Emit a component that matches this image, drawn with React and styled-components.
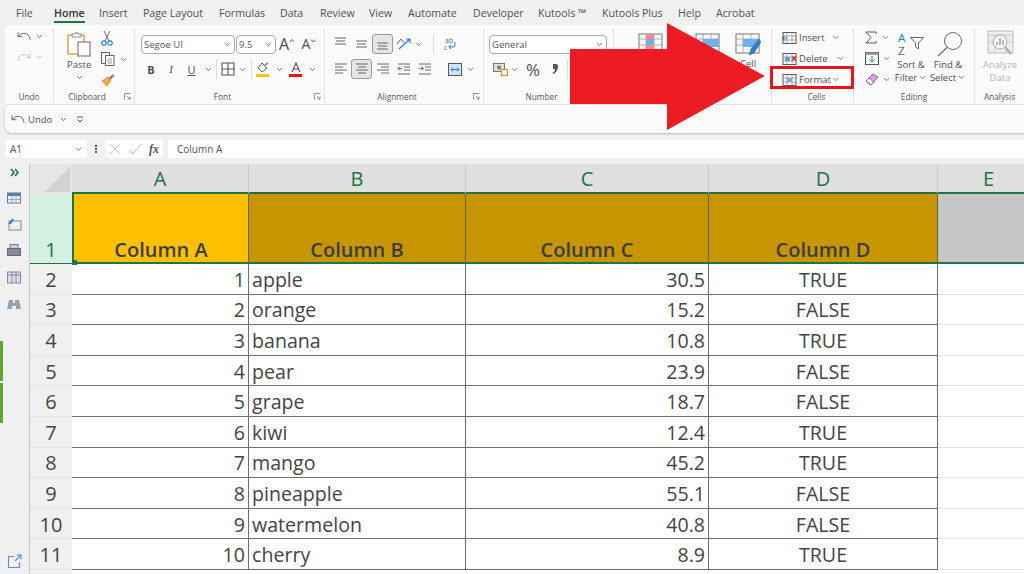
import React from 'react';
import styled, { createGlobalStyle } from 'styled-components';
import { ChevronDown, Undo, Redo } from 'lucide-react';

const GlobalStyle = createGlobalStyle`
  html, body { margin: 0; padding: 0; background: #f0f0f0; }
  body { font-family: "Open Sans", "Noto Sans", sans-serif; color: #444; }
`;

const TABS = [
  ['File', 38], ['Home', 45], ['Insert', 44], ['Page Layout', 76], ['Formulas', 61], ['Data', 40], ['Review', 49],
  ['View', 39], ['Automate', 65], ['Developer', 65], ['Kutools ™', 64], ['Kutools Plus', 76], ['Help', 38], ['Acrobat', 50],
];

const ROWS = [
  [1, 'apple', '30.5', 'TRUE'],
  [2, 'orange', '15.2', 'FALSE'],
  [3, 'banana', '10.8', 'TRUE'],
  [4, 'pear', '23.9', 'FALSE'],
  [5, 'grape', '18.7', 'FALSE'],
  [6, 'kiwi', '12.4', 'TRUE'],
  [7, 'mango', '45.2', 'TRUE'],
  [8, 'pineapple', '55.1', 'FALSE'],
  [9, 'watermelon', '40.8', 'FALSE'],
  [10, 'cherry', '8.9', 'TRUE'],
];

const Page = styled.div`
  position: relative;
  width: 1024px;
  height: 574px;
  overflow: hidden;
  background: #f0f0f0;
`;

const TabBar = styled.div`
  display: flex;
  height: 25px;
  padding-left: 16px;
  align-items: center;
  font-size: 10.6px;
`;

const Tab = styled.div`
  flex: none;
  width: ${p => p.$w}px;
`;

const TabLabel = styled.span`
  position: relative;
  font-weight: ${p => (p.$active ? 600 : 400)};
  color: ${p => (p.$active ? '#333' : '#505050')};
  ${p => p.$active && `
    &::after {
      content: '';
      position: absolute;
      left: 0;
      right: 0;
      bottom: -3px;
      height: 2px;
      background: #217346;
    }
  `}
`;

const Ribbon = styled.div`
  display: flex;
  height: 80px;
  margin-left: 5px;
  background: #fbfbfb;
  border-radius: 6px 0 0 0;
  border-bottom: 1px solid #e2e2e2;
  box-sizing: border-box;
`;

const Group = styled.div`
  display: flex;
  flex-direction: column;
  flex: none;
  box-sizing: border-box;
  width: ${p => p.$w}px;
  height: 75px;
  margin-top: 3px;
  border-right: ${p => (p.$last ? 'none' : '1px solid #e2e2e2')};
`;

const GroupBody = styled.div`
  display: flex;
  height: 62px;
  box-sizing: border-box;
  padding-left: ${p => p.$pl || 0}px;
  padding-top: ${p => p.$pt ?? 6}px;
`;

const GroupFoot = styled.div`
  display: grid;
  grid-template-columns: 1fr auto 1fr;
  align-items: center;
  height: 13px;
  font-size: 8.3px;
  color: #555;
`;

const FootLabel = styled.span`
  grid-column: 2;
  margin-right: ${p => p.$mr || 0}px;
  margin-left: ${p => p.$ml || 0}px;
`;

const Launcher = styled.svg`
  grid-column: 3;
  justify-self: end;
  margin-right: 3px;
  width: 7px;
  height: 7px;
`;

const Col = styled.div`
  display: flex;
  flex: none;
  flex-direction: column;
  gap: ${p => p.$gap || 0}px;
  align-items: ${p => p.$align || 'flex-start'};
  margin-left: ${p => p.$ml || 0}px;
  margin-top: ${p => p.$mt || 0}px;
  ${p => p.$w && `width: ${p.$w}px;`}
`;

const Row = styled.div`
  display: flex;
  align-items: center;
  height: 20px;
  margin-top: ${p => p.$mt || 0}px;
`;

const Slot = styled.div`
  display: flex;
  flex: none;
  align-items: center;
  justify-content: center;
  box-sizing: border-box;
  width: ${p => p.$w || 20}px;
  height: 20px;
  margin-left: ${p => p.$ml || 0}px;
  border-radius: 3px;
  ${p => p.$on && 'background: #e6e6e6; border: 1px solid #9a9a9a;'}
`;

const VSep = styled.div`
  flex: none;
  width: 1px;
  height: 20px;
  margin: 0 ${p => p.$m || 5}px;
  background: #dcdcdc;
`;

const Caret = styled(ChevronDown).attrs({ size: 9, strokeWidth: 2 })`
  flex: none;
  color: ${p => (p.$dim ? '#b5b5b5' : '#555')};
  margin-left: ${p => p.$ml || 0}px;
  margin-top: ${p => p.$mt || 0}px;
`;

const SelectBox = styled.div`
  display: flex;
  align-items: center;
  justify-content: space-between;
  box-sizing: border-box;
  flex: none;
  width: ${p => p.$w}px;
  height: 19px;
  margin-left: ${p => p.$ml || 0}px;
  padding: 0 2px;
  background: #fff;
  border: 1px solid #a9a9a9;
  border-radius: 4px;
  font-size: 9.5px;
  color: #555;
`;

const FontBtn = styled.span`
  font-family: ${p => (p.$serif ? '"Liberation Serif", serif' : 'inherit')};
  font-size: 11px;
  font-weight: ${p => (p.$b ? 700 : 400)};
  font-style: ${p => (p.$i ? 'italic' : 'normal')};
  text-decoration: ${p => (p.$u ? 'underline' : 'none')};
  color: #505050;
`;

const BigFont = styled.span`
  font-size: ${p => p.$s}px;
  color: #505050;
  line-height: 1;
`;

const Tiny = styled.span`
  font-size: 9.5px;
  line-height: 13px;
  margin-top: ${p => p.$mt || 0}px;
  color: ${p => (p.$dim ? '#b4b4b4' : '#505050')};
  white-space: nowrap;
  display: flex;
  align-items: center;
  justify-content: center;
`;

const CellRow = styled.div`
  position: relative;
  display: flex;
  align-items: center;
  height: 21px;
  padding-left: 10px;
  font-size: 9.5px;
  color: #505050;
  ${p => p.$marked && `
    &::after {
      content: '';
      position: absolute;
      left: -2px;
      top: -3px;
      width: 84px;
      height: 23px;
      box-sizing: border-box;
      border: 3px solid #e8141c;
    }
  `}
`;

const CellLabel = styled.span`
  margin-left: 2px;
`;

const SortGlyph = styled.div`
  display: flex;
  align-items: flex-start;
  gap: 2px;
  height: 25px;
`;

const SortLetters = styled.div`
  display: flex;
  flex-direction: column;
  width: 10px;
`;

const SortLetter = styled.span`
  display: block;
  font-family: "Liberation Sans", sans-serif;
  font-size: 11px;
  line-height: 12.7px;
  color: ${p => (p.$blue ? '#2b7cd3' : '#666')};
`;

const QuickBar = styled.div`
  display: flex;
  align-items: center;
  height: 28px;
  margin-left: 5px;
  padding-left: 5px;
  box-sizing: border-box;
  background: #fafafa;
  border-radius: 0 0 0 6px;
  box-shadow: 0 1px 2px rgba(0, 0, 0, 0.22);
  font-size: 9.5px;
  color: #505050;
`;

const FormulaBar = styled.div`
  display: flex;
  align-items: center;
  height: 18px;
  margin: 7px 0 6px;
  padding-left: 6px;
`;

const FieldBox = styled.div`
  display: flex;
  align-items: center;
  box-sizing: border-box;
  flex: ${p => (p.$grow ? '1' : 'none')};
  width: ${p => p.$w || 'auto'}px;
  height: 18px;
  padding: 0 ${p => p.$px ?? 4}px;
  margin-left: ${p => p.$ml || 0}px;
  background: #fff;
  border-radius: ${p => (p.$grow ? '3px 0 0 3px' : '3px')};
  font-size: 10px;
  color: #505050;
  justify-content: ${p => (p.$between ? 'space-between' : 'flex-start')};
`;

const Dots = styled.div`
  width: 2px;
  height: 8px;
  margin-left: 8px;
  background: repeating-linear-gradient(#555 0 2px, transparent 2px 3px);
`;

const Main = styled.div`
  display: flex;
  height: 410px;
`;

const SidePane = styled.div`
  display: flex;
  flex-direction: column;
  align-items: center;
  flex: none;
  box-sizing: border-box;
  width: 30px;
  padding-top: 4px;
  border-right: 1px solid #c8c8c8;
`;

const PaneIcon = styled.div`
  display: flex;
  justify-content: center;
  width: 100%;
  height: 14px;
  margin-top: ${p => p.$mt || 0}px;
`;

const AddinStrip = styled.div`
  align-self: flex-start;
  width: 3px;
  height: 82px;
  margin-top: 29px;
  background: linear-gradient(#5fa82e 0 49%, #fff 49% 51%, #5fa82e 51%);
`;

const Sheet = styled.div`
  display: grid;
  flex: 1;
  min-width: 0;
  overflow: hidden;
  grid-template-columns: 42px 177px 217px 243px 229px 102px;
  grid-template-rows: 30px 70px repeat(10, 30.6px) 4px;
  background: #fff;
`;

const Corner = styled.div`
  background: #e6e6e6;
  position: relative;
  &::after {
    content: '';
    position: absolute;
    right: 2px;
    bottom: 2px;
    border-style: solid;
    border-width: 0 0 25px 25px;
    border-color: transparent transparent #d2d2d2 transparent;
  }
`;

const ColHead = styled.div`
  display: flex;
  align-items: center;
  justify-content: center;
  box-sizing: border-box;
  background: #e0e0e0;
  border-right: 1px solid #c9c9c9;
  border-bottom: 2px solid #217346;
  font-size: 20px;
  color: #217346;
`;

const RowHead = styled.div`
  display: flex;
  align-items: ${p => (p.$sel ? 'flex-end' : 'center')};
  justify-content: center;
  box-sizing: border-box;
  padding-top: ${p => (p.$sel ? 0 : 1)}px;
  background: ${p => (p.$sel ? '#d3f0e0' : '#f0f0f0')};
  border-bottom: 1px solid ${p => (p.$sel ? '#217346' : '#e2e2e2')};
  font-size: 20px;
  line-height: 27px;
  color: ${p => (p.$sel ? '#217346' : '#444')};
`;

const HeadCell = styled.div`
  position: relative;
  display: flex;
  align-items: flex-end;
  justify-content: center;
  box-sizing: border-box;
  background: ${p => p.$bg};
  border-right: ${p => (p.$plain ? 'none' : '1px solid #5f5f5f')};
  border-bottom: 2px solid #217346;
  font-size: 20px;
  line-height: 25px;
  font-weight: 600;
  color: #3c3c3c;
  ${p => p.$active && `
    border-left: 2px solid #217346;
    &::after {
      content: '';
      position: absolute;
      left: -2px;
      bottom: -3px;
      width: 5px;
      height: 5px;
      background: #217346;
    }
  `}
`;

const Cell = styled.div`
  display: flex;
  align-items: center;
  justify-content: ${p => p.$align || 'flex-start'};
  box-sizing: border-box;
  padding: 1px 3px 0;
  border-right: 1px solid ${p => (p.$plain ? 'transparent' : '#6e6e6e')};
  border-bottom: 1px solid ${p => (p.$plain ? '#e2e2e2' : '#6e6e6e')};
  font-size: 19.6px;
  color: #444;
`;

const Filler = styled.div`
  background: ${p => (p.$head ? '#f0f0f0' : '#fff')};
`;

const Arrow = styled.svg`
  position: absolute;
  left: 570px;
  top: 23px;
`;

const SizeGlyph = styled.svg`
  width: 6px;
  height: 5px;
  margin-bottom: 7px;
`;

// hand drawn ribbon icons
const Lines = ({ rows, color = '#666' }) => (
  <svg width="18" height="18" viewBox="0 0 18 18">
    {rows.map(([x1, x2, y], i) => (
      <line key={i} x1={x1} x2={x2} y1={y} y2={y} stroke={color} strokeWidth="1" />
    ))}
  </svg>
);

const PasteIcon = () => (
  <svg width="24" height="26" viewBox="0 0 24 26">
    <rect x="1" y="4" width="16" height="19" rx="1" fill="#fff" stroke="#e8a050" strokeWidth="1.6" />
    <path d="M5 5 V3 h3 a1.5 1.5 0 0 1 3 0 h3 v3 H5z" fill="#fff" stroke="#888" />
    <rect x="11" y="11" width="12" height="14" fill="#fff" stroke="#666" />
  </svg>
);

const CutIcon = () => (
  <svg width="12" height="15" viewBox="0 0 12 15">
    <path d="M3 0 L8 10 M9 0 L4 10" stroke="#666" strokeWidth="1" fill="none" />
    <circle cx="3" cy="12" r="2.2" fill="none" stroke="#2b7cd3" strokeWidth="1.2" />
    <circle cx="9" cy="12" r="2.2" fill="none" stroke="#2b7cd3" strokeWidth="1.2" />
  </svg>
);

const CopyIcon = () => (
  <svg width="14" height="14" viewBox="0 0 14 14">
    <rect x="0.5" y="0.5" width="8" height="11" fill="#fff" stroke="#666" />
    <rect x="4.5" y="3.5" width="8.5" height="10" fill="#fff" stroke="#666" />
    <path d="M6.5 7h4.5M6.5 9h4.5M6.5 11h4.5" stroke="#888" strokeWidth="0.8" />
  </svg>
);

const BrushIcon = () => (
  <svg width="14" height="14" viewBox="0 0 14 14">
    <path d="M1 8 L6 13 L10 7 L7 4z" fill="#f2a94e" stroke="#d98324" strokeWidth="0.8" />
    <path d="M8 5 L12 1.5 L13 2.5 L9.5 6.5" fill="#888" stroke="#666" strokeWidth="0.6" />
  </svg>
);

const BorderIcon = () => (
  <svg width="14" height="14" viewBox="0 0 14 14">
    <path d="M1 1h12v12H1zM7 1v12M1 7h12" fill="none" stroke="#555" strokeWidth="1.1" />
  </svg>
);

const FillIcon = () => (
  <svg width="14" height="15" viewBox="0 0 14 15">
    <path d="M6 1 L11 6 L6 10 L2 6z" fill="#fff" stroke="#555" />
    <path d="M9 3 L12 1" stroke="#2b7cd3" strokeWidth="1.4" />
    <rect x="0" y="12" width="13" height="3" fill="#ffc000" />
  </svg>
);

const ColorA = () => (
  <svg width="14" height="15" viewBox="0 0 14 15">
    <path d="M3 10 L7 1 L11 10 M4.5 7h5" fill="none" stroke="#555" strokeWidth="1.1" />
    <rect x="0" y="12" width="13" height="3" fill="#e8141c" />
  </svg>
);

const OrientIcon = () => (
  <svg width="16" height="14" viewBox="0 0 16 14">
    <path d="M1 7 L5 2 L8 6" fill="none" stroke="#666" />
    <path d="M3 12 L14 2 M14 2 h-4 M14 2 v4" fill="none" stroke="#2b7cd3" strokeWidth="1.2" />
  </svg>
);

const IndentIcon = ({ flip }) => (
  <svg width="14" height="12" viewBox="0 0 14 12">
    <path d="M1 1h12M7 4h6M7 7h6M1 11h12" stroke="#666" />
    <path d={flip ? 'M1 5.5h4M3.5 3.5l2 2-2 2' : 'M5 5.5H1M3 3.5l-2 2 2 2'} fill="none" stroke="#2b7cd3" />
  </svg>
);

const WrapIcon = () => (
  <svg width="14" height="15" viewBox="0 0 14 15">
    <text x="1" y="6" fontSize="7" fill="#666" fontFamily="Open Sans">ab</text>
    <text x="0" y="13" fontSize="7" fill="#666" fontFamily="Open Sans">c</text>
    <path d="M11 5 v3 a2 2 0 0 1 -2 2 H5 M7 8 l-2 2 2 2" fill="none" stroke="#2b7cd3" />
  </svg>
);

const MergeIcon = () => (
  <svg width="14" height="13" viewBox="0 0 14 13">
    <rect x="0.5" y="0.5" width="13" height="12" fill="#cfe4f7" stroke="#555" />
    <path d="M3 6.5h8M3 6.5l2-2M3 6.5l2 2M11 6.5l-2-2M11 6.5l-2 2" fill="none" stroke="#2b7cd3" />
  </svg>
);

const MoneyIcon = () => (
  <svg width="15" height="14" viewBox="0 0 15 14">
    <rect x="0.5" y="1.5" width="11" height="8" fill="#ddd" stroke="#777" />
    <circle cx="6" cy="5.5" r="2" fill="#777" />
    <rect x="8.5" y="7.5" width="6" height="6" fill="#fff" stroke="#e58a2c" strokeWidth="1.2" />
  </svg>
);

const CommaIcon = () => (
  <svg width="8" height="12" viewBox="0 0 8 12">
    <path d="M2 1 h3 a2 2 0 0 1 2 2 C7 7 5 10 2 11 L1.5 10 C3 9 4 8 4 6 H2z" fill="#555" />
  </svg>
);

const SheetIcon = ({ kind }) => (
  <svg width="26" height="24" viewBox="0 0 26 24">
    <rect x="1" y="1" width="23" height="19" fill="#fff" stroke="#777" />
    <path d="M1 6h23M1 12h23M8 1v19M16 1v19" stroke="#999" strokeWidth="0.8" />
    {kind === 'cond' && (
      <>
        <rect x="8" y="1" width="8" height="5" fill="#ff8a8a" />
        <rect x="8" y="6" width="8" height="6" fill="#6fb1ec" />
        <rect x="8" y="12" width="8" height="6" fill="#ff8a8a" />
      </>
    )}
    {kind === 'table' && <rect x="8" y="6" width="16" height="8" fill="#6fb1ec" />}
    {kind === 'cell' && (
      <>
        <rect x="8" y="6" width="16" height="8" fill="#6fb1ec" />
        <path d="M24 6 L16 16 L14 22 L19 20 L26 9z" fill="#2b7cd3" stroke="#666" strokeWidth="0.6" />
      </>
    )}
  </svg>
);

const CellsIcon = ({ kind }) => (
  <svg width="15" height="14" viewBox="0 0 15 14">
    <rect x="1" y="1.5" width="13" height="11" fill="#fff" stroke="#555" />
    <path d="M1 5h13M1 9h13M5 1.5v11M10 1.5v11" stroke="#888" strokeWidth="0.7" />
    {kind === 'insert' && <path d="M0 7h5M2.5 4.5 0 7l2.5 2.5" fill="none" stroke="#2b7cd3" strokeWidth="1.2" />}
    {kind === 'delete' && <rect x="3" y="5" width="5" height="4" fill="#5a9fe0" />}
    {kind === 'delete' && <path d="M10 4.5l4 4M14 4.5l-4 4" stroke="#e8141c" strokeWidth="1.2" />}
    {kind === 'format' && <rect x="5" y="5" width="5" height="4" fill="#6fb1ec" />}
  </svg>
);

const SumIcon = () => (
  <svg width="12" height="13" viewBox="0 0 12 13">
    <path d="M11 3 V1 H1 L6 6.5 L1 12 H11 V10" fill="none" stroke="#555" />
  </svg>
);

const FillDown = () => (
  <svg width="14" height="13" viewBox="0 0 14 13">
    <rect x="0.5" y="0.5" width="13" height="12" fill="#fff" stroke="#555" />
    <rect x="0.5" y="0.5" width="13" height="2.5" fill="#999" />
    <path d="M7 4v6M4.5 7.5 7 10l2.5-2.5" fill="none" stroke="#2b7cd3" />
  </svg>
);

const EraserIcon = () => (
  <svg width="14" height="13" viewBox="0 0 14 13">
    <path d="M1 8 L8 1 L13 4 L6 12z" fill="#d9a6e0" stroke="#a855b5" />
    <path d="M1 8 L4 5 L9 9 L6 12z" fill="#fff" stroke="#a855b5" />
  </svg>
);

const SortIcon = () => (
  <SortGlyph>
    <SortLetters>
      <SortLetter $blue>A</SortLetter>
      <SortLetter>Z</SortLetter>
    </SortLetters>
    <svg width="14" height="18" viewBox="0 0 14 18">
      <path d="M0.5 5.5 H13.5 L8.5 11 V17 L5.5 15 V11z" fill="#fff" stroke="#666" />
    </svg>
  </SortGlyph>
);

const FindIcon = () => (
  <svg width="27" height="25" viewBox="0 0 27 25">
    <circle cx="18" cy="9" r="8.5" fill="#fff" stroke="#666" />
    <path d="M12 15.5 L3 24" stroke="#666" strokeWidth="1.1" />
  </svg>
);

const AnalyzeIcon = () => (
  <svg width="27" height="26" viewBox="0 0 27 26">
    <rect x="1" y="1" width="25" height="22" fill="#eee" stroke="#bbb" />
    <path d="M1 5h25M1 12h25M8 5v18M19 5v18" stroke="#ccc" />
    <circle cx="13" cy="12" r="7" fill="#f5f5f5" stroke="#aaa" />
    <path d="M10 15v-3M13 15V8M16 15v-5" stroke="#aaa" strokeWidth="1.6" />
    <path d="M18 17 L24 24" stroke="#aaa" strokeWidth="2" />
  </svg>
);

const CancelIcon = () => (
  <svg width="12" height="12" viewBox="0 0 12 12">
    <path d="M1 1l10 10M11 1L1 11" stroke="#c4c4c4" />
  </svg>
);

const EnterIcon = () => (
  <svg width="14" height="12" viewBox="0 0 14 12">
    <path d="M1 7l4 4 8-10" fill="none" stroke="#c4c4c4" />
  </svg>
);

const Fx = styled.span`
  font-family: "Liberation Serif", serif;
  font-style: italic;
  font-weight: 700;
  font-size: 12px;
  color: #555;
`;

const Expand = () => (
  <svg width="10" height="9" viewBox="0 0 10 9">
    <path d="M1 1l3 3.5L1 8M5 1l3 3.5L5 8" fill="none" stroke="#217346" strokeWidth="1.6" />
  </svg>
);

const Customize = () => (
  <svg width="8" height="7" viewBox="0 0 8 7">
    <path d="M1 1h6M1.5 3.5 4 6l2.5-2.5" fill="none" stroke="#555" />
  </svg>
);

const PaneGlyph = ({ kind }) => (
  <svg width="15" height="13" viewBox="0 0 15 13">
    {kind === 'table' && (
      <>
        <rect x="0.5" y="1" width="13" height="10" fill="#eef" stroke="#5b7ea6" />
        <rect x="0.5" y="1" width="13" height="3" fill="#5b7ea6" />
        <path d="M5 4v7M9 4v7M1 7.5h12" stroke="#9ab" />
      </>
    )}
    {kind === 'fx' && (
      <>
        <rect x="2" y="3" width="12" height="9" fill="#eee" stroke="#889" />
        <path d="M1 6 L5 1 H7 L4 6z" fill="#2b7cd3" />
      </>
    )}
    {kind === 'print' && (
      <>
        <rect x="3" y="0.5" width="8" height="4" fill="#ccd" stroke="#778" />
        <rect x="0.5" y="4.5" width="13" height="7" fill="#889" stroke="#667" />
      </>
    )}
    {kind === 'cols' && (
      <>
        <rect x="0.5" y="1" width="13" height="11" fill="#dde" stroke="#889" />
        <path d="M5 1v11M9 1v11M1 4h12" stroke="#889" />
      </>
    )}
    {kind === 'find' && (
      <path d="M2 2h4v3h2V2h4l2 9H9V8H5v3H0z" fill="#8ea3b8" />
    )}
  </svg>
);

const ShareIcon = () => (
  <svg width="15" height="15" viewBox="0 0 15 15">
    <path d="M7 2.5H1.5v11h11V8M8 7l6-6M9.5 1H14v4.5" fill="none" stroke="#5b8fc7" strokeWidth="1.1" />
  </svg>
);

const Dialog = () => (
  <Launcher viewBox="0 0 7 7">
    <path d="M0.5 6.5V0.5H6.5M3 3l3 3M6 3.5V6H3.5" fill="none" stroke="#777" strokeWidth="0.8" />
  </Launcher>
);

function App() {
  return (
    <Page>
      <GlobalStyle />
      <TabBar>
        {TABS.map(([t, w]) => (
          <Tab key={t} $w={w}><TabLabel $active={t === 'Home'}>{t}</TabLabel></Tab>
        ))}
      </TabBar>

      <Ribbon>
        <Group $w={49}>
          <GroupBody $pl={11} $pt={0}>
            <Col $mt={-2}>
              <Row><Undo size={16} color="#555" strokeWidth={1.3} /><Caret $ml={3} /></Row>
              <Row $mt={1}><Redo size={16} color="#bdbdbd" strokeWidth={1.3} /><Caret $ml={3} $dim /></Row>
            </Col>
          </GroupBody>
          <GroupFoot><FootLabel>Undo</FootLabel></GroupFoot>
        </Group>

        <Group $w={81}>
          <GroupBody $pl={13} $pt={3}>
            <Col $align="center">
              <PasteIcon />
              <Tiny $mt={1}>Paste</Tiny>
              <Caret $mt={2} />
            </Col>
            <Col $ml={10} $gap={1} $mt={-3}>
              <Row><CutIcon /></Row>
              <Row><CopyIcon /><Caret $ml={4} /></Row>
              <Row><BrushIcon /></Row>
            </Col>
          </GroupBody>
          <GroupFoot><FootLabel $mr={14}>Clipboard</FootLabel><Dialog /></GroupFoot>
        </Group>

        <Group $w={190}>
          <GroupBody $pl={6}>
            <Col $gap={5}>
              <Row>
                <SelectBox $w={94}>Segoe UI<Caret /></SelectBox>
                <SelectBox $w={40} $ml={1}>9.5<Caret /></SelectBox>
                <Slot $w={22}>
                  <BigFont $s={16}>A</BigFont>
                  <SizeGlyph viewBox="0 0 6 5"><path d="M1 4l2-2.5L5 4" fill="none" stroke="#2b7cd3" /></SizeGlyph>
                </Slot>
                <Slot $w={22}>
                  <BigFont $s={14}>A</BigFont>
                  <SizeGlyph viewBox="0 0 6 5"><path d="M1 1.5 3 4l2-2.5" fill="none" stroke="#2b7cd3" /></SizeGlyph>
                </Slot>
              </Row>
              <Row>
                <Slot><FontBtn $b>B</FontBtn></Slot>
                <Slot><FontBtn $i $serif>I</FontBtn></Slot>
                <Slot $w={21}><FontBtn $u>U</FontBtn></Slot>
                <Caret $ml={2} />
                <VSep $m={3} />
                <Slot $w={16}><BorderIcon /></Slot>
                <Caret $ml={2} />
                <VSep $m={4} />
                <Slot $w={14}><FillIcon /></Slot>
                <Caret $ml={5} />
                <Slot $w={24}><ColorA /></Slot>
                <Caret />
              </Row>
            </Col>
          </GroupBody>
          <GroupFoot><FootLabel $mr={14}>Font</FootLabel><Dialog /></GroupFoot>
        </Group>

        <Group $w={159}>
          <GroupBody $pl={6}>
            <Col $gap={5}>
              <Row>
                <Slot $w={20}><Lines rows={[[3, 14, 3], [4, 13, 6], [3, 14, 9]]} /></Slot>
                <Slot $w={21}><Lines rows={[[3, 14, 6], [4, 13, 9], [3, 14, 12]]} /></Slot>
                <Slot $w={21} $on><Lines rows={[[3, 14, 8], [4, 13, 11], [3, 14, 14]]} /></Slot>
                <Slot $w={22}><OrientIcon /></Slot>
                <Caret $ml={-1} />
                <VSep $m={10} />
                <Slot $w={14}><WrapIcon /></Slot>
              </Row>
              <Row>
                <Slot $w={20}><Lines rows={[[3, 15, 4], [3, 11, 7], [3, 15, 10], [3, 11, 13]]} /></Slot>
                <Slot $w={21} $on><Lines rows={[[3, 15, 4], [5, 13, 7], [3, 15, 10], [5, 13, 13]]} /></Slot>
                <Slot $w={21}><Lines rows={[[3, 15, 4], [7, 15, 7], [3, 15, 10], [7, 15, 13]]} /></Slot>
                <Slot $w={21}><IndentIcon /></Slot>
                <Slot $w={21}><IndentIcon flip /></Slot>
                <Slot $w={18} $ml={11}><MergeIcon /></Slot>
                <Caret $ml={2} />
              </Row>
            </Col>
          </GroupBody>
          <GroupFoot><FootLabel $mr={14}>Alignment</FootLabel><Dialog /></GroupFoot>
        </Group>

        <Group $w={130}>
          <GroupBody $pl={5}>
            <Col $gap={5}>
              <Row><SelectBox $w={118}>General<Caret /></SelectBox></Row>
              <Row>
                <Slot $w={20} $ml={1}><MoneyIcon /></Slot>
                <Caret />
                <Slot $w={26} $ml={1}><BigFont $s={17}>%</BigFont></Slot>
                <Slot $w={18}><CommaIcon /></Slot>
                <VSep $m={3} />
              </Row>
            </Col>
          </GroupBody>
          <GroupFoot><FootLabel $mr={14}>Number</FootLabel></GroupFoot>
        </Group>

        <Group $w={158}>
          <GroupBody $pl={24} $pt={5}>
            <SheetIcon kind="cond" />
            <Col $ml={31}><SheetIcon kind="table" /></Col>
            <Col $ml={14} $align="center">
              <SheetIcon kind="cell" />
              <Tiny>Cell</Tiny>
            </Col>
          </GroupBody>
          <GroupFoot><FootLabel>Styles</FootLabel></GroupFoot>
        </Group>

        <Group $w={82}>
          <GroupBody $pt={0}>
            <Col $mt={-1}>
              <CellRow><CellsIcon kind="insert" /><CellLabel>Insert</CellLabel><Caret $ml={6} /></CellRow>
              <CellRow><CellsIcon kind="delete" /><CellLabel>Delete</CellLabel><Caret $ml={8} /></CellRow>
              <CellRow $marked><CellsIcon kind="format" /><CellLabel>Format</CellLabel><Caret /></CellRow>
            </Col>
          </GroupBody>
          <GroupFoot><FootLabel $ml={8}>Cells</FootLabel></GroupFoot>
        </Group>

        <Group $w={121}>
          <GroupBody $pt={0} $pl={11}>
            <Col $mt={-1}>
              <Row><SumIcon /><Caret $ml={4} /></Row>
              <Row $mt={1}><FillDown /><Caret $ml={3} /></Row>
              <Row $mt={1}><EraserIcon /><Caret $ml={3} /></Row>
            </Col>
            <Col $ml={2} $mt={4} $w={36} $align="center">
              <SortIcon />
              <Tiny $mt={1}>Sort &amp;</Tiny>
              <Tiny>Filter<Caret $ml={1} /></Tiny>
            </Col>
            <Col $ml={1} $mt={4} $w={36} $align="center">
              <FindIcon />
              <Tiny $mt={1}>Find &amp;</Tiny>
              <Tiny>Select<Caret $ml={1} /></Tiny>
            </Col>
          </GroupBody>
          <GroupFoot><FootLabel>Editing</FootLabel></GroupFoot>
        </Group>

        <Group $w={49} $last>
          <GroupBody $pt={2} $pl={8}>
            <Col $align="center">
              <AnalyzeIcon />
              <Tiny $dim $mt={2}>Analyze</Tiny>
              <Tiny $dim>Data</Tiny>
            </Col>
          </GroupBody>
          <GroupFoot><FootLabel>Analysis</FootLabel></GroupFoot>
        </Group>
      </Ribbon>

      <QuickBar>
        <Undo size={16} color="#555" strokeWidth={1.3} />
        <CellLabel>Undo</CellLabel>
        <Caret $ml={7} />
        <Slot $w={16} $ml={4}><Customize /></Slot>
      </QuickBar>

      <FormulaBar>
        <FieldBox $w={81} $between>A1<Caret /></FieldBox>
        <Dots />
        <FieldBox $w={58} $ml={8} $between><CancelIcon /><EnterIcon /><Fx>fx</Fx></FieldBox>
        <FieldBox $grow $ml={5} $px={9}>Column A</FieldBox>
      </FormulaBar>

      <Main>
        <SidePane>
          <Expand />
          <PaneIcon $mt={15}><PaneGlyph kind="table" /></PaneIcon>
          <PaneIcon $mt={12}><PaneGlyph kind="fx" /></PaneIcon>
          <PaneIcon $mt={12}><PaneGlyph kind="print" /></PaneIcon>
          <PaneIcon $mt={13}><PaneGlyph kind="cols" /></PaneIcon>
          <PaneIcon $mt={13}><PaneGlyph kind="find" /></PaneIcon>
          <AddinStrip />
          <PaneIcon $mt={131}><ShareIcon /></PaneIcon>
        </SidePane>

        <Sheet>
          <Corner />
          {['A', 'B', 'C', 'D', 'E'].map(c => <ColHead key={c}>{c}</ColHead>)}

          <RowHead $sel>1</RowHead>
          <HeadCell $bg="#ffc000" $active>Column A</HeadCell>
          <HeadCell $bg="#c79500">Column B</HeadCell>
          <HeadCell $bg="#c79500">Column C</HeadCell>
          <HeadCell $bg="#c79500">Column D</HeadCell>
          <HeadCell $bg="#c6c6c6" $plain />

          {ROWS.map(([n, name, val, flag]) => (
            <React.Fragment key={n}>
              <RowHead>{n + 1}</RowHead>
              <Cell $align="flex-end">{n}</Cell>
              <Cell>{name}</Cell>
              <Cell $align="flex-end">{val}</Cell>
              <Cell $align="center">{flag}</Cell>
              <Cell $plain />
            </React.Fragment>
          ))}

          <Filler $head />
          <Filler />
          <Filler />
          <Filler />
          <Filler />
          <Filler />
        </Sheet>
      </Main>

      <Arrow width="197" height="109" viewBox="0 0 197 109">
        <polygon points="0,26 97,26 97,0 195,53 97,107 97,81 0,81" fill="#ed1c24" />
      </Arrow>
    </Page>
  );
}

export default App;
